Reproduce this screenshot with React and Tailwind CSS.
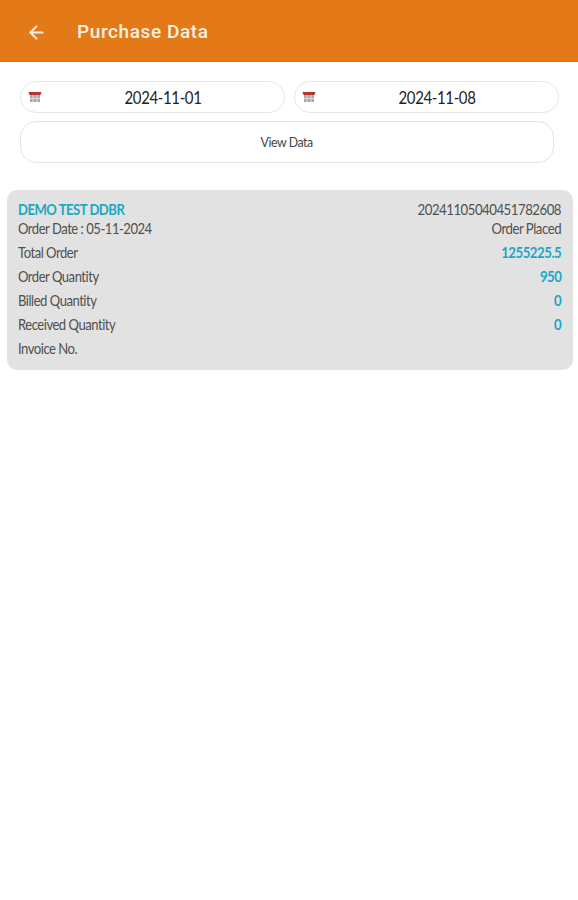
import React from 'react';
import { ArrowLeft } from 'lucide-react';

const rows = [
  { label: 'Total Order', value: '1255225.5' },
  { label: 'Order Quantity', value: '950' },
  { label: 'Billed Quantity', value: '0' },
  { label: 'Received Quantity', value: '0' },
  { label: 'Invoice No.', value: '' },
];

const CalendarIcon = () => (
  <svg width="14" height="12" viewBox="0 0 14 12" className="shrink-0">
    <path d="M0.5 1h13l-1 3h-11z" fill="#b5342c" />
    <rect x="2" y="4" width="10" height="7" fill="#a9a9a9" />
    <path d="M5 4v7M9 4v7M2 7.5h10" stroke="#dddddd" strokeWidth="1" />
  </svg>
);

const DatePill = ({ value }) => (
  <div className="flex h-[32px] w-[265px] shrink-0 items-center rounded-full border border-[#e6e6e6] bg-white pl-[7px]">
    <CalendarIcon />
    <span className="flex-1 scale-x-[0.88] text-center text-[17px] leading-none tracking-[-0.4px] text-[#222222]">{value}</span>
  </div>
);

const Left = ({ className, children }) => (
  <span className={`inline-block origin-left scale-x-[0.87] whitespace-nowrap ${className || ''}`}>{children}</span>
);

const Right = ({ className, children }) => (
  <span className={`inline-block origin-right scale-x-[0.88] whitespace-nowrap ${className || ''}`}>{children}</span>
);

export default function App() {
  return (
    <div className="min-h-[900px] bg-white font-['Lato',sans-serif]">
      {/* Header */}
      <div className="flex h-[62px] items-center border-b border-[#d9720f] bg-[#e47a17] pl-[26px] pt-[3px]">
        <ArrowLeft size={21} strokeWidth={2.2} color="#fdf0e2" />
        <span className="ml-[30px] font-['Roboto',sans-serif] text-[19px] font-medium tracking-[0.6px] text-[#fdf0e2]">Purchase Data</span>
      </div>

      {/* Filters */}
      <div className="px-[20px] pt-[19px]">
        <div className="flex gap-[9px]">
          <DatePill value="2024-11-01" />
          <DatePill value="2024-11-08" />
        </div>
        <div className="mt-[8px] flex h-[42px] w-[534px] items-center justify-center rounded-[16px] border border-[#e4e4e4] bg-white pb-[2px] text-[14px] tracking-[-0.5px] text-[#444444]">
          <span className="inline-block scale-x-[0.88]">View Data</span>
        </div>
      </div>

      {/* Order card */}
      <div className="ml-[7px] mt-[27px] h-[180px] w-[566px] rounded-[10px] bg-[#e2e2e2] pl-[11px] pr-[12px] pt-[10px] text-[15px] leading-[18px] tracking-[-0.55px] text-[#505050]">
        <div className="flex justify-between">
          <Left className="font-bold text-[#1ba8c4]">DEMO TEST DDBR</Left>
          <Right>20241105040451782608</Right>
        </div>
        <div className="mt-[1px] flex justify-between">
          <Left>Order Date : 05-11-2024</Left>
          <Right>Order Placed</Right>
        </div>
        <div className="mt-[6px] flex flex-col gap-[6px]">
          {rows.map((row) => (
            <div key={row.label} className="flex h-[18px] justify-between">
              <Left>{row.label}</Left>
              <Right className="font-bold text-[#1ba8c4]">{row.value}</Right>
            </div>
          ))}
        </div>
      </div>
    </div>
  );
}
